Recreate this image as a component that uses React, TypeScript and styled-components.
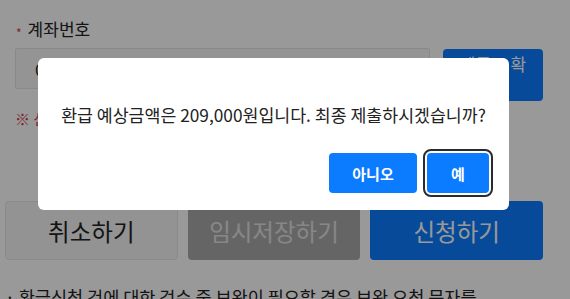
import styled, { createGlobalStyle } from "styled-components"

const GlobalStyle = createGlobalStyle`
  html, body {
    margin: 0;
    padding: 0;
    background: #fff;
    overflow: hidden;
    height: 299px;
  }
  * {
    box-sizing: border-box;
  }
  body {
    font-family: "Noto Sans CJK KR", "Noto Sans", sans-serif;
    color: #222;
  }
`

const Page = styled.div`
  width: 570px;
  padding: 17px 27px 0 15px;
  display: flex;
  flex-direction: column;
  & > * {
    flex-shrink: 0;
  }
`

const Label = styled.div`
  font-size: 17px;
  line-height: 24px;
  height: 24px;
  color: #222;
  display: flex;
  align-items: center;
`

const Required = styled.span`
  color: #e0383e;
  font-size: 12px;
  line-height: 12px;
  margin: 7px 6px 0 1px;
`

const FieldRow = styled.div`
  display: flex;
  align-items: flex-start;
  gap: 13px;
  margin-top: 7px;
`

const Input = styled.div`
  flex: 1;
  height: 41px;
  background: #f7f7f7;
  border: 1px solid #e4e4e4;
  border-radius: 2px;
  padding: 0 19px;
  display: flex;
  align-items: center;
  font-size: 17px;
  color: #222;
`

const CheckButton = styled.button`
  width: 100px;
  height: 52px;
  margin-top: 1px;
  padding: 3px 12px;
  border: none;
  border-radius: 4px;
  background: #0b7cff;
  color: #fff;
  font-family: inherit;
  font-size: 17px;
  line-height: 22px;
  word-break: break-all;
`

const Notice = styled.p`
  margin: 7px 0 0;
  font-size: 15px;
  line-height: 22px;
  color: #d23a48;
`

const ActionRow = styled.div`
  display: grid;
  grid-template-columns: repeat(3, 1fr);
  gap: 10px;
  margin: 71px 0 0 -10px;
  height: 59px;
`

const ActionButton = styled.button<{ kind: "cancel" | "save" | "submit" }>`
  border-radius: 4px;
  font-family: inherit;
  font-size: 23.5px;
  border: 1px solid ${p => (p.kind === "cancel" ? "#e6e6e6" : "transparent")};
  background: ${p =>
    p.kind === "cancel" ? "#f6f6f6" : p.kind === "save" ? "#a9a9a9" : "#0b7cff"};
  color: ${p => (p.kind === "cancel" ? "#222" : p.kind === "save" ? "#e2e2e2" : "#fff")};
`

const Guide = styled.p`
  margin: 25px 0 0 -10px;
  font-size: 17.5px;
  line-height: 24px;
  color: #222;
  white-space: nowrap;
`

const Overlay = styled.div`
  position: fixed;
  inset: 0;
  background: rgba(0, 0, 0, 0.4);
  display: flex;
  align-items: flex-start;
  padding: 58px 0 0 38px;
`

const Modal = styled.div`
  width: 471px;
  background: #fff;
  border-radius: 6px;
  padding: 45px 20px 17px;
  display: flex;
  flex-direction: column;
`

const Message = styled.div`
  font-size: 17.3px;
  line-height: 24px;
  color: #222;
  text-align: center;
  white-space: nowrap;
`

const ModalActions = styled.div`
  display: flex;
  justify-content: flex-end;
  gap: 10px;
  margin-top: 26px;
`

const ModalButton = styled.button<{ focused?: boolean }>`
  height: 40px;
  width: ${p => (p.focused ? "62px" : "88px")};
  border: none;
  border-radius: 4px;
  background: #0b7bff;
  color: #fff;
  font-family: inherit;
  font-size: 15px;
  font-weight: 700;
  outline: ${p => (p.focused ? "2px solid #2b2b2b" : "none")};
  outline-offset: 2px;
`

export default function App() {
  return (
    <>
      <GlobalStyle />
      <Page>
        <Label>
          <Required>*</Required>계좌번호
        </Label>
        <FieldRow>
          <Input>01012345678</Input>
          <CheckButton>예금주 확인</CheckButton>
        </FieldRow>
        <Notice>※ 신청인 본인 명의의 계좌만 등록 가능합니다.</Notice>
        <ActionRow>
          <ActionButton kind="cancel">취소하기</ActionButton>
          <ActionButton kind="save">임시저장하기</ActionButton>
          <ActionButton kind="submit">신청하기</ActionButton>
        </ActionRow>
        <Guide>· 환급신청 건에 대한 검수 중 보완이 필요할 경우 보완 요청 문자를</Guide>
      </Page>
      <Overlay>
        <Modal>
          <Message>환급 예상금액은 209,000원입니다. 최종 제출하시겠습니까?</Message>
          <ModalActions>
            <ModalButton>아니오</ModalButton>
            <ModalButton focused>예</ModalButton>
          </ModalActions>
        </Modal>
      </Overlay>
    </>
  )
}
